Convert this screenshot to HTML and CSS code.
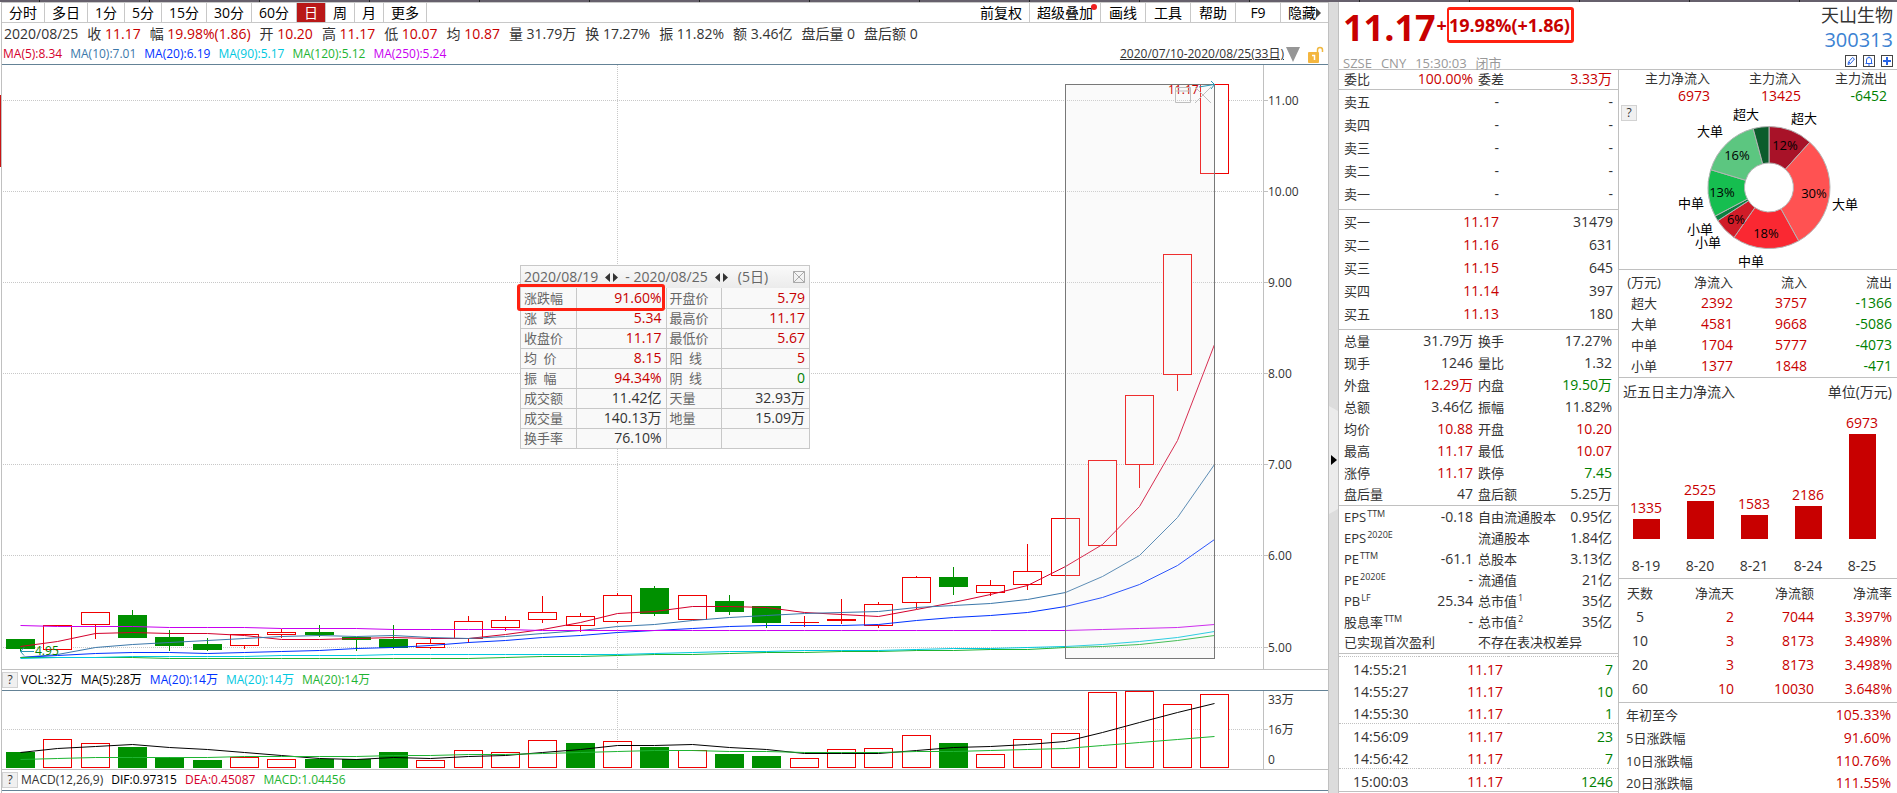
FILE: index.html
```html
<!DOCTYPE html>
<html lang="zh-CN">
  <head>
    <meta charset="UTF-8" />
    <meta name="viewport" content="width=device-width, initial-scale=1.0" />
    <title>天山生物 300313</title>
    <link rel="stylesheet" href="styles.css">
  </head>
  <body>
    <div class="strip"></div>
    <div class="layout">
      <main class="main">
        <nav class="toolbar">
          <button>分时</button>
          <button>多日</button>
          <button>1分</button>
          <button>5分</button>
          <button>15分</button>
          <button>30分</button>
          <button>60分</button>
          <button class="active">日</button>
          <button>周</button>
          <button>月</button>
          <button>更多</button>
          <div class="tools">
            <button>前复权</button>
            <button class="has-dot">超级叠加</button>
            <button>画线</button>
            <button>工具</button>
            <button>帮助</button>
            <button>F9</button>
            <button class="hide-btn">隐藏<svg width="5" height="10" viewBox="0 0 5 10"><path d="M0 0L5 5L0 10Z" fill="#444" /></svg></button>
          </div>
        </nav>
        <div class="quote-line">
          <span>2020/08/25</span>
          <span>收 <b>11.17</b></span>
          <span>幅 <b>19.98%(1.86)</b></span>
          <span>开 <b>10.20</b></span>
          <span>高 <b>11.17</b></span>
          <span>低 <b>10.07</b></span>
          <span>均 <b>10.87</b></span>
          <span>量 31.79万</span>
          <span>换 17.27%</span>
          <span>振 11.82%</span>
          <span>额 3.46亿</span>
          <span>盘后量 0</span>
          <span>盘后额 0</span>
        </div>
        <div class="ma-line">
          <span class="ma5">MA(5):8.34</span>
          <span class="ma10">MA(10):7.01</span>
          <span class="ma20">MA(20):6.19</span>
          <span class="ma90">MA(90):5.17</span>
          <span class="ma120">MA(120):5.12</span>
          <span class="ma250">MA(250):5.24</span>
          <a class="range" href="#">2020/07/10-2020/08/25(33日)</a>
          <svg class="range-arrow" width="14" height="15" viewBox="0 0 14 15"><path d="M0 0H14L7 15Z" fill="#969696" /></svg>
          <svg class="lock" width="16" height="17" viewBox="0 0 16 17">
            <path d="M9.500 7V4a2.500 2.500 0 0 1 5 0V6" fill="none" stroke="#f0b840" stroke-width="1.500" />
            <rect x="0" y="6" width="11" height="11" rx="1" fill="#f4b63f" />
            <path d="M4 9.500H6.500V14" fill="none" stroke="#fff" stroke-width="1.500" />
          </svg>
        </div>

        <div class="price-chart">
          <svg id="price" viewBox="2 65 1326 604"></svg>
          <div class="popup">
            <div class="popup-head">
              <span>2020/08/19</span>
              <svg width="13" height="9" viewBox="0 0 13 9"><path d="M5 0V9L0 4.500ZM8 0V9L13 4.500Z" fill="#333" /></svg>
              <span>- 2020/08/25</span>
              <svg width="13" height="9" viewBox="0 0 13 9"><path d="M5 0V9L0 4.500ZM8 0V9L13 4.500Z" fill="#333" /></svg>
              <span class="popup-days">(5日)</span>
              <button class="popup-close" aria-label="关闭"><svg width="12" height="12" viewBox="0 0 12 12"><path d="M.5 .5H11.500V11.500H.5ZM.5 .5L11.500 11.500M11.500 .5L.5 11.500" fill="none" stroke="#aaa" /></svg></button>
            </div>
            <table>
              <tr><th>涨跌幅</th><td class="red">91.60%</td><th>开盘价</th><td class="red">5.79</td></tr>
              <tr><th>涨&ensp;跌</th><td class="red">5.34</td><th>最高价</th><td class="red">11.17</td></tr>
              <tr><th>收盘价</th><td class="red">11.17</td><th>最低价</th><td class="red">5.67</td></tr>
              <tr><th>均&ensp;价</th><td class="red">8.15</td><th>阳&ensp;线</th><td class="red">5</td></tr>
              <tr><th>振&ensp;幅</th><td class="red">94.34%</td><th>阴&ensp;线</th><td class="green">0</td></tr>
              <tr><th>成交额</th><td>11.42亿</td><th>天量</th><td>32.93万</td></tr>
              <tr><th>成交量</th><td>140.13万</td><th>地量</th><td>15.09万</td></tr>
              <tr><th>换手率</th><td>76.10%</td><th></th><td></td></tr>
            </table>
            <div class="callout"></div>
          </div>
        </div>

        <div class="ind-line">
          <button class="help">?</button>
          <span class="black">VOL:32万</span>
          <span class="black">MA(5):28万</span>
          <span class="ma20">MA(20):14万</span>
          <span class="ma90">MA(20):14万</span>
          <span class="ma120">MA(20):14万</span>
        </div>
        <div class="vol-chart">
          <svg id="volume" viewBox="2 691 1326 78"></svg>
        </div>
        <div class="ind-line">
          <button class="help">?</button>
          <span>MACD(12,26,9)</span>
          <span class="black">DIF:0.97315</span>
          <span class="ma5">DEA:0.45087</span>
          <span class="ma120">MACD:1.04456</span>
        </div>
      </main>

      <div class="splitter">
        <svg width="9" height="108" viewBox="0 0 9 108">
          <path d="M0 0L9 5V103L0 108Z" fill="#ebebeb" />
          <path d="M2 49L8 54L2 59Z" fill="#000" />
        </svg>
      </div>

      <aside class="side">
        <header class="head">
          <div>
            <div class="price-line"><span class="last">11.17</span><span class="chg">+<span class="chg-box">19.98%(+1.86)</span></span></div>
            <div class="market"><span>SZSE</span><span>CNY</span><span>15:30:03</span><span>闭市</span></div>
          </div>
          <div class="stock">
            <div class="name">天山生物</div>
            <div class="code">300313</div>
            <div class="icons">
              <button aria-label="编辑"><svg width="12" height="12" viewBox="0 0 12 12"><rect x=".5" y=".5" width="11" height="11" /><path d="M3 9.500L3.500 7L7.500 2.500L9.500 4L5.500 8.500ZM4 7L5.500 8.500" /></svg></button>
              <button aria-label="提醒"><svg width="12" height="12" viewBox="0 0 12 12"><rect x=".5" y=".5" width="11" height="11" /><path d="M2.500 8.500H9.500M3.500 8.500V5a2.500 2.500 0 0 1 5 0V8.500M5 10H7M6 1.500V2.500" /></svg></button>
              <button aria-label="加入"><svg width="12" height="12" viewBox="0 0 12 12"><rect x=".5" y=".5" width="11" height="11" /><path d="M2 6H10M6 2V10" stroke-width="2" /></svg></button>
            </div>
          </div>
        </header>

        <div class="cols">
          <div class="col">
            <table class="stats weibi">
              <tr><th>委比</th><td class="red">100.00%</td><th>委差</th><td class="red">3.33万</td></tr>
            </table>
            <table class="book">
              <tr><th>卖五</th><td>-</td><td>-</td></tr>
              <tr><th>卖四</th><td>-</td><td>-</td></tr>
              <tr><th>卖三</th><td>-</td><td>-</td></tr>
              <tr><th>卖二</th><td>-</td><td>-</td></tr>
              <tr><th>卖一</th><td>-</td><td>-</td></tr>
            </table>
            <table class="book">
              <tr><th>买一</th><td class="red">11.17</td><td>31479</td></tr>
              <tr><th>买二</th><td class="red">11.16</td><td>631</td></tr>
              <tr><th>买三</th><td class="red">11.15</td><td>645</td></tr>
              <tr><th>买四</th><td class="red">11.14</td><td>397</td></tr>
              <tr><th>买五</th><td class="red">11.13</td><td>180</td></tr>
            </table>
            <table class="stats">
              <tr><th>总量</th><td>31.79万</td><th>换手</th><td>17.27%</td></tr>
              <tr><th>现手</th><td>1246</td><th>量比</th><td>1.32</td></tr>
              <tr><th>外盘</th><td class="red">12.29万</td><th>内盘</th><td class="green">19.50万</td></tr>
              <tr><th>总额</th><td>3.46亿</td><th>振幅</th><td>11.82%</td></tr>
              <tr><th>均价</th><td class="red">10.88</td><th>开盘</th><td class="red">10.20</td></tr>
              <tr><th>最高</th><td class="red">11.17</td><th>最低</th><td class="red">10.07</td></tr>
              <tr><th>涨停</th><td class="red">11.17</td><th>跌停</th><td class="green">7.45</td></tr>
              <tr><th>盘后量</th><td>47</td><th>盘后额</th><td>5.25万</td></tr>
            </table>
            <table class="stats basics">
              <tr><th>EPS<sup>TTM</sup></th><td>-0.18</td><th>自由流通股本</th><td>0.95亿</td></tr>
              <tr><th>EPS<sup>2020E</sup></th><td></td><th>流通股本</th><td>1.84亿</td></tr>
              <tr><th>PE<sup>TTM</sup></th><td>-61.1</td><th>总股本</th><td>3.13亿</td></tr>
              <tr><th>PE<sup>2020E</sup></th><td>-</td><th>流通值</th><td>21亿</td></tr>
              <tr><th>PB<sup>LF</sup></th><td>25.34</td><th>总市值<sup>1</sup></th><td>35亿</td></tr>
              <tr><th>股息率<sup>TTM</sup></th><td>-</td><th>总市值<sup>2</sup></th><td>35亿</td></tr>
              <tr><th colspan="2">已实现首次盈利</th><th colspan="2">不存在表决权差异</th></tr>
            </table>
            <table class="ticks">
              <tbody>
                <tr><td>14:55:21</td><td class="red">11.17</td><td class="green">7</td></tr>
                <tr><td>14:55:27</td><td class="red">11.17</td><td class="green">10</td></tr>
                <tr><td>14:55:30</td><td class="red">11.17</td><td class="green">1</td></tr>
              </tbody>
              <tbody>
                <tr><td>14:56:09</td><td class="red">11.17</td><td class="green">23</td></tr>
                <tr><td>14:56:42</td><td class="red">11.17</td><td class="green">7</td></tr>
              </tbody>
              <tbody>
                <tr><td>15:00:03</td><td class="red">11.17</td><td class="green">1246</td></tr>
              </tbody>
            </table>
          </div>

          <div class="col">
            <section class="fund">
              <table>
                <tr><th>主力净流入</th><th>主力流入</th><th>主力流出</th><th></th></tr>
                <tr><td class="red">6973</td><td class="red">13425</td><td class="green">-6452</td><td></td></tr>
              </table>
              <button class="help fund-help">?</button>
              <svg id="donut" viewBox="0 104 278 165"></svg>
            </section>
            <table class="flow">
              <tr><th>(万元)</th><th>净流入</th><th>流入</th><th>流出</th></tr>
              <tr><th>超大</th><td class="red">2392</td><td class="red">3757</td><td class="green">-1366</td></tr>
              <tr><th>大单</th><td class="red">4581</td><td class="red">9668</td><td class="green">-5086</td></tr>
              <tr><th>中单</th><td class="red">1704</td><td class="red">5777</td><td class="green">-4073</td></tr>
              <tr><th>小单</th><td class="red">1377</td><td class="red">1848</td><td class="green">-471</td></tr>
            </table>
            <section class="five">
              <div class="five-head"><span>近五日主力净流入</span><span>单位(万元)</span></div>
              <div class="bars" id="bars"></div>
            </section>
            <table class="days">
              <tr><th>天数</th><th>净流天</th><th>净流额</th><th>净流率</th></tr>
              <tr><td>5</td><td class="red">2</td><td class="red">7044</td><td class="red">3.397%</td></tr>
              <tr><td>10</td><td class="red">3</td><td class="red">8173</td><td class="red">3.498%</td></tr>
              <tr><td>20</td><td class="red">3</td><td class="red">8173</td><td class="red">3.498%</td></tr>
              <tr><td>60</td><td class="red">10</td><td class="red">10030</td><td class="red">3.648%</td></tr>
            </table>
            <table class="perf">
              <tr><th>年初至今</th><td class="red">105.33%</td></tr>
              <tr><th>5日涨跌幅</th><td class="red">91.60%</td></tr>
              <tr><th>10日涨跌幅</th><td class="red">110.76%</td></tr>
              <tr><th>20日涨跌幅</th><td class="red">111.55%</td></tr>
            </table>
          </div>
        </div>
      </aside>
    </div>
    <script src="chart.js"></script>
  </body>
</html>
```
FILE: styles.css
```css
* {
  box-sizing: border-box;
}
body {
  margin: 0;
  font-family: "Open Sans", "Noto Sans CJK SC", sans-serif;
  font-size: 14px;
  line-height: 18px;
  color: #333;
  background: #fff;
}
button {
  margin: 0;
  padding: 0;
  border: 0;
  background: none;
  font: inherit;
  color: #000;
}
table {
  width: 100%;
  border-collapse: collapse;
  table-layout: fixed;
}
th,
td {
  padding: 0;
  font-weight: normal;
  text-align: right;
  white-space: nowrap;
}
th {
  font-size: 13px;
}
svg {
  display: block;
}
.red {
  color: #c80000;
}
.green {
  color: #008000;
}
.black {
  color: #000;
}
.ma5 { color: #d4002c; }
.ma10 { color: #3c78aa; }
.ma20 { color: #0032ff; }
.ma90 { color: #00c8e0; }
.ma120 { color: #1eb432; }
.ma250 { color: #c800f0; }

/* window tabs edge */
.strip {
  height: 2px;
  background: repeating-linear-gradient(90deg, transparent 0 39px, #222 39px 40px, transparent 40px 110px), #66606c;
}
.layout {
  display: grid;
  grid-template-columns: minmax(0, 1fr) 11px 558px;
  grid-template-rows: 100%;
  height: calc(100vh - 2px);
  overflow: hidden;
}

/* left side */
.main {
  position: relative;
  margin-left: 1px;
  border-left: 1px solid #c0c0c0;
  white-space: nowrap;
}
/* marker of the neighbouring pane */
.main::before {
  content: "";
  position: absolute;
  left: -2px;
  top: 93px;
  width: 1px;
  height: 72px;
  background: #c81414;
}
.toolbar {
  display: flex;
  height: 21px;
  border-top: 1px solid #c8c8c8;
  border-bottom: 1px solid #c8c8c8;
}
.toolbar button {
  padding: 0 7px;
  border-right: 1px solid #c8c8c8;
}
.toolbar .active {
  background: #b91818;
  color: #fff;
}
.tools {
  display: flex;
  margin-left: auto;
}
.tools button {
  min-width: 45px;
}
.tools button:last-child {
  border-right: 0;
}
.hide-btn {
  display: flex;
  align-items: center;
}
.has-dot {
  position: relative;
}
.has-dot::after {
  content: "";
  position: absolute;
  top: 1px;
  right: 3px;
  width: 6px;
  height: 6px;
  border-radius: 50%;
  background: #f02020;
}
.quote-line {
  display: flex;
  gap: 9px;
  padding-left: 2px;
  line-height: 22px;
  height: 21px;
}
.quote-line b {
  font-weight: normal;
  color: #c80000;
}
.ma-line {
  display: flex;
  align-items: center;
  gap: 8px;
  height: 21px;
  padding: 0 4px 0 1px;
  font-size: 12px;
  border-bottom: 1px solid #648296;
}
.range {
  margin-left: auto;
  color: #333;
  font-size: 12px;
}
.range-arrow {
  margin-left: -6px;
}
.price-chart {
  position: relative;
  border-bottom: 1px solid #c0c0c0;
}
.vol-chart {
  border-bottom: 1px solid #c0c0c0;
}
.ind-line {
  display: flex;
  align-items: center;
  gap: 8px;
  height: 21px;
  font-size: 12px;
  border-bottom: 1px solid #648296;
}
.help {
  width: 16px;
  height: 16px;
  border: 1px solid #d2d2d2;
  background: #f0f0f0;
  font-size: 12px;
  line-height: 14px;
  color: #333;
}
.ind-line .help {
  margin-right: -5px;
}

/* svg text and shapes */
svg text {
  font-size: 12px;
  fill: #333;
}
.grid {
  stroke: #c8c8c8;
  stroke-dasharray: 1 1;
}
.axis {
  stroke: #c0c0c0;
}
.up {
  fill: #fff;
  stroke: #f00000;
}
.down {
  fill: #009000;
  stroke: #009000;
}
.line {
  fill: none;
  stroke: currentColor;
}
.selection {
  fill: #e6e6e6;
  fill-opacity: 0.2;
  stroke: #787878;
}
.faint {
  fill: none;
  stroke: #bebebe;
}
.arrow {
  fill: none;
  stroke: #2896b4;
}
svg .hi {
  fill: #c80000;
}
svg .lo {
  fill: #008000;
}

/* range statistics popup */
.popup {
  position: absolute;
  left: 518px;
  top: 200px;
  width: 290px;
  border: 1px solid #c8c8c8;
  background: #f9f9f9;
}
.popup-head {
  display: flex;
  align-items: center;
  gap: 7px;
  height: 22px;
  padding: 0 4px 0 3px;
  color: #666;
  background: linear-gradient(#fafafa, #ebebeb);
}
.popup-days {
  margin-left: 3px;
}
.popup-close {
  margin-left: auto;
}
.popup th,
.popup td {
  height: 20px;
  padding: 0 4px;
  border: 1px solid #c8c8c8;
}
.popup table {
  border-style: hidden;
}
.popup tr:first-child > * {
  border-top: 1px solid #c8c8c8;
}
.popup th {
  width: 55px;
  padding: 0 3px;
  text-align: left;
  color: #666;
}
.popup th:first-child + td {
  width: 90px;
}
.callout {
  position: absolute;
  left: -4px;
  top: 18px;
  width: 148px;
  height: 27px;
  border: 3px solid #ff2010;
  border-radius: 3px;
}

.splitter {
  display: flex;
  align-items: center;
  border: solid #c0c0c0;
  border-width: 0 1px;
  background: #dcdcdc;
  padding-top: 124px;
}

/* right side */
.head {
  display: flex;
  justify-content: space-between;
  height: 68px;
  padding: 0 4px;
  border-bottom: 1px solid #c0c0c0;
}
.price-line {
  display: flex;
  align-items: center;
  height: 52px;
  color: #c80000;
  font-weight: bold;
}
.last {
  font-size: 36px;
}
.chg {
  display: flex;
  align-items: center;
  margin: 0 0 6px 1px;
  font-size: 18px;
}
.chg-box {
  width: 127px;
  padding: 3px 0;
  line-height: 24px;
  border: 3px solid #ff2010;
  border-left-width: 2px;
  border-radius: 3px;
}
.market {
  display: flex;
  gap: 9px;
  font-size: 13px;
  color: #999;
}
.stock {
  text-align: right;
}
.name {
  font-size: 18px;
  line-height: 26px;
}
.code {
  font-size: 20px;
  line-height: 24px;
  color: #3c82d2;
}
.icons {
  display: flex;
  justify-content: flex-end;
  gap: 6px;
  padding-top: 3px;
}
.icons svg {
  fill: none;
  stroke: #2864e6;
}
.icons rect {
  stroke: #444;
}
.cols {
  display: grid;
  grid-template-columns: 280px minmax(0, 1fr);
}
.col:first-child {
  border-right: 1px solid #c0c0c0;
}
.col > table,
.col > section {
  border-bottom: 1px solid #c0c0c0;
}

.stats th {
  height: 22px;
  padding-left: 5px;
  text-align: left;
  width: 86px;
}
.stats th:first-child {
  width: 60px;
}
.stats th + td {
  width: 74px;
}
.stats td:last-child {
  width: auto;
  padding-right: 6px;
}
.weibi th {
  height: 19px;
}
.basics th {
  height: 21px;
}
sup {
  margin-left: 1px;
  font-size: 9px;
  line-height: 0;
  vertical-align: 5px;
}
.book {
  border-collapse: separate;
  border-spacing: 0;
  padding: 1px 0 3px;
}
.book th {
  width: 60px;
  height: 23px;
  padding-left: 5px;
  text-align: left;
}
.book td:nth-child(2) {
  width: 100px;
}
.book td:last-child {
  padding-right: 5px;
}
.ticks {
  margin-top: 2px;
}
.ticks tbody {
  border-top: 1px dotted #c0c0c0;
}
.ticks td {
  height: 22px;
  padding: 4px 5px 0 0;
}
.ticks td:first-child {
  width: 80px;
  padding-left: 14px;
  text-align: left;
}
.ticks td:nth-child(2) {
  width: 89px;
}

.fund {
  position: relative;
}
.fund th,
.fund td {
  width: 91px;
  height: 17px;
  line-height: 17px;
}
.fund th:nth-child(3) {
  width: 86px;
}
.fund th:last-child {
  width: auto;
}
.fund-help {
  position: absolute;
  left: 2px;
  top: 35px;
}
.slice {
  stroke: #b4b4b4;
}
#donut {
  overflow: visible;
}
#donut text {
  text-anchor: middle;
  fill: #000;
  font-size: 13px;
}
.flow {
  border-collapse: separate;
  border-spacing: 0;
  padding: 1px 0;
}
.flow th,
.flow td {
  height: 21px;
  width: 74px;
}
.flow th:first-child {
  width: 50px;
  text-align: center;
}
.flow th:nth-child(2) {
  width: 64px;
}
.flow tr > :last-child,
.days tr > :last-child {
  width: auto;
  padding-right: 5px;
}
.five-head {
  display: flex;
  justify-content: space-between;
  padding: 0 5px 0 4px;
  line-height: 28px;
}
.bars {
  display: grid;
  grid-template-columns: repeat(5, 1fr);
  padding: 0 8px 2px 0;
}
.bar {
  display: flex;
  flex-direction: column;
  align-items: center;
}
.bar-area {
  display: flex;
  flex-direction: column;
  align-items: center;
  justify-content: flex-end;
  height: 133px;
  color: #c80000;
}
.bar-fill {
  width: 27px;
  margin-top: 2px;
  background: #c80000;
}
.bar-date {
  margin-top: 17px;
  line-height: 20px;
}
.days {
  border-collapse: separate;
  border-spacing: 0;
  padding: 2px 0 1px;
}
.days th,
.days td {
  height: 24px;
  width: 80px;
}
.days tr > :first-child {
  width: 42px;
  text-align: center;
}
.days tr > :nth-child(2) {
  width: 73px;
}
.perf th,
.perf td {
  height: 23px;
  padding: 0 6px 0 7px;
}
.perf th {
  text-align: left;
}
```
FILE: chart.js
```js
var NS = "http://www.w3.org/2000/svg";
var START = 20.5;
var STEP = 37.3125;

// [direction, body top, body bottom, high, low, volume top]
var candles = [
  ["d", 639, 649, 639, 651, 752], ["u", 625, 649, 625, 649, 739], ["u", 612, 624, 612, 639, 743],
  ["d", 615, 638, 610, 638, 747], ["d", 637, 646, 630, 651, 757], ["d", 644, 650, 638, 651, 760],
  ["u", 634, 645, 634, 649, 757], ["u", 632, 634, 629, 638, 759], ["d", 632, 635, 625, 637, 759],
  ["d", 637, 640, 637, 651, 759], ["d", 639, 648, 625, 649, 752], ["u", 643, 647, 639, 649, 760],
  ["u", 621, 638, 616, 643, 750], ["u", 620, 627, 616, 631, 752], ["u", 612, 619, 596, 623, 740],
  ["u", 616, 625, 613, 632, 743], ["u", 595, 621, 593, 623, 741], ["d", 588, 614, 586, 616, 747],
  ["u", 595, 619, 595, 619, 750], ["d", 601, 612, 595, 615, 754], ["d", 606, 623, 606, 628, 756],
  ["u", 622, 622, 616, 627, 758], ["u", 619, 620, 599, 624, 749], ["u", 604, 625, 602, 628, 748],
  ["u", 577, 602, 576, 609, 735], ["d", 577, 587, 567, 595, 743], ["u", 585, 592, 580, 596, 754],
  ["u", 571, 584, 544, 590, 739], ["u", 518, 575, 518, 575, 733], ["u", 460, 545, 460, 545, 692],
  ["u", 395, 464, 395, 488, 691], ["u", 254, 374, 254, 391, 704], ["u", 84, 173, 84, 173, 694]
];
// candles whose volume bar is green while the body is red
var volDown = { 15: true };

var ma5 = [646, 641, 633, 632, 633, 633, 635, 639, 639, 638, 637, 638, 638, 634, 629, 622, 613, 611, 606, 606, 607, 612, 614, 616, 609, 602, 594, 585, 566, 544, 506, 440, 344];
var ma10 = [657, 654, 647, 644, 642, 640, 638, 636, 635, 636, 635, 637, 638, 636, 633, 630, 626, 624, 620, 617, 615, 613, 612, 611, 607, 605, 603, 599, 592, 576, 555, 517, 464];
var ma20 = [657, 655, 653, 652, 652, 653, 652, 651, 650, 648, 647, 645, 642, 640, 637, 635, 632, 630, 628, 626, 625, 625, 625, 624, 620, 617, 615, 612, 606, 597, 584, 565, 539];
var ma90 = [658, 657, 657, 656, 656, 656, 656, 655, 655, 655, 654, 654, 654, 654, 654, 654, 654, 653, 652, 651, 651, 650, 650, 650, 649, 648, 648, 647, 646, 644, 641, 637, 631];
var ma120 = [657, 657, 657, 657, 658, 658, 658, 658, 658, 658, 658, 658, 658, 657, 656, 656, 655, 654, 654, 653, 652, 652, 651, 651, 650, 650, 649, 649, 647, 646, 644, 640, 635];
var ma250 = [625, 626, 626, 626, 627, 627, 627, 628, 628, 628, 629, 629, 629, 629, 630, 630, 630, 630, 630, 630, 630, 630, 630, 630, 630, 630, 630, 630, 630, 629, 628, 627, 624];
var vol5 = [752, 748, 746, 744, 747, 749, 752, 755, 758, 759, 757, 758, 756, 755, 752, 749, 745, 745, 744, 747, 749, 753, 753, 753, 750, 747, 746, 744, 741, 732, 722, 712, 703];
var vol20 = [759, 758, 757, 757, 757, 757, 756, 756, 756, 756, 755, 755, 754, 754, 753, 752, 751, 750, 750, 751, 751, 752, 752, 752, 751, 751, 750, 749, 748, 745, 742, 739, 736];

function el(parent, tag, attrs, text) {
  var node = document.createElementNS(NS, tag);
  for (var key in attrs) node.setAttribute(key, attrs[key]);
  if (text) node.textContent = text;
  parent.appendChild(node);
  return node;
}
function cx(i) {
  return Math.floor(START + i * STEP) + 0.5;
}
function hline(svg, x1, x2, y, cls) {
  el(svg, "line", { x1: x1, x2: x2, y1: y + 0.5, y2: y + 0.5, class: cls });
}
function vline(svg, x, y1, y2, cls) {
  el(svg, "line", { x1: x + 0.5, x2: x + 0.5, y1: y1, y2: y2, class: cls });
}
function box(svg, i, top, bottom, cls) {
  el(svg, "rect", { x: cx(i) - 14, y: top + 0.5, width: 28, height: bottom - top, class: cls });
}
function curve(svg, values, cls) {
  var points = values.map(function (y, i) {
    return cx(i) + "," + (y + 0.5);
  });
  el(svg, "polyline", { points: points.join(" "), class: "line " + cls });
}

function drawPrice() {
  var svg = document.getElementById("price");
  [100, 191, 282, 373, 464, 555, 647].forEach(function (y, i) {
    hline(svg, 3, 1263, y, "grid");
    hline(svg, 1263, 1268, y, "axis");
    el(svg, "text", { x: 1268, y: y + 5 }, (11 - i).toFixed(2));
  });
  vline(svg, 617, 65, 668, "grid");
  vline(svg, 1263, 65, 669, "axis");
  candles.forEach(function (c, i) {
    var cls = c[0] === "u" ? "up" : "down";
    vline(svg, cx(i) - 0.5, c[3], c[1], cls);
    vline(svg, cx(i) - 0.5, c[2], c[4], cls);
    if (c[1] === c[2]) {
      hline(svg, cx(i) - 14.5, cx(i) + 14.5, c[1], cls);
    } else {
      box(svg, i, c[1], cls === "up" ? c[2] : c[2] - 1, cls);
    }
  });
  curve(svg, ma5, "ma5");
  curve(svg, ma10, "ma10");
  curve(svg, ma20, "ma20");
  curve(svg, ma120, "ma120");
  curve(svg, ma90, "ma90");
  curve(svg, ma250, "ma250");
  el(svg, "path", { d: "M34 651.5H20.500M24 647.5L20.500 651.5L24 655.5", class: "arrow" });
  el(svg, "text", { x: 35, y: 655, class: "lo" }, "4.95");
  el(svg, "rect", { x: 1065.5, y: 84.5, width: 149, height: 574, class: "selection" });
  el(svg, "text", { x: 1168, y: 94, class: "hi" }, "11.17");
  el(svg, "path", { d: "M1175.5 87.5H1190.5V102.5H1175.5ZM1175.5 91H1190.5M1195 87L1211 103M1211 87L1195 103", class: "faint" });
  el(svg, "path", { d: "M1199 87L1214 84.5M1211 81L1214.5 84.5L1211 89", class: "arrow" });
}

function drawVolume() {
  var svg = document.getElementById("volume");
  hline(svg, 3, 1263, 729, "grid");
  hline(svg, 1263, 1268, 729, "axis");
  vline(svg, 617, 691, 768, "grid");
  vline(svg, 1263, 691, 769, "axis");
  candles.forEach(function (c, i) {
    box(svg, i, c[5], 767, c[0] === "u" && !volDown[i] ? "up" : "down");
  });
  curve(svg, vol5, "black");
  curve(svg, vol20, "ma120");
  el(svg, "text", { x: 1268, y: 704 }, "33万");
  el(svg, "text", { x: 1268, y: 734 }, "16万");
  el(svg, "text", { x: 1268, y: 764 }, "0");
}

function drawDonut() {
  var svg = document.getElementById("donut");
  var x0 = 150, y0 = 187.5, R = 61, r = 24.5;
  // [end angle, colour]
  var slices = [[42, "#a81228"], [151, "#ff5252"], [215, "#fa2832"], [237, "#d01c28"], [242, "#0a8040"], [287, "#16be50"], [345, "#5cc680"], [360, "#0c5c2c"]];
  var from = 0;
  function pt(radius, deg) {
    var a = deg * Math.PI / 180;
    return (x0 + radius * Math.sin(a)).toFixed(1) + " " + (y0 - radius * Math.cos(a)).toFixed(1);
  }
  slices.forEach(function (s) {
    var d = "M" + pt(R, from) + "A" + R + " " + R + " 0 0 1 " + pt(R, s[0]) + "L" + pt(r, s[0]) + "A" + r + " " + r + " 0 0 0 " + pt(r, from) + "Z";
    el(svg, "path", { d: d, fill: s[1], class: "slice" });
    from = s[0];
  });
  [
    [127, 119, "超大"], [185, 123, "超大"], [91, 136, "大单"], [72, 208, "中单"], [226, 209, "大单"],
    [81, 234, "小单"], [89, 247, "小单"], [132, 266, "中单"],
    [166, 150, "12%"], [195, 198, "30%"], [147, 238, "18%"], [117, 224, "6%"], [103, 197, "13%"], [118, 160, "16%"]
  ].forEach(function (t) {
    el(svg, "text", { x: t[0], y: t[1] }, t[2]);
  });
}

function drawBars() {
  var data = [["8-19", 1335], ["8-20", 2525], ["8-21", 1583], ["8-24", 2186], ["8-25", 6973]];
  document.getElementById("bars").innerHTML = data.map(function (d) {
    var h = Math.round(d[1] / 6973 * 105);
    return '<div class="bar"><div class="bar-area"><span>' + d[1] + '</span><div class="bar-fill" style="height:' + h + 'px"></div></div><span class="bar-date">' + d[0] + "</span></div>";
  }).join("");
}

drawPrice();
drawVolume();
drawDonut();
drawBars();
```
